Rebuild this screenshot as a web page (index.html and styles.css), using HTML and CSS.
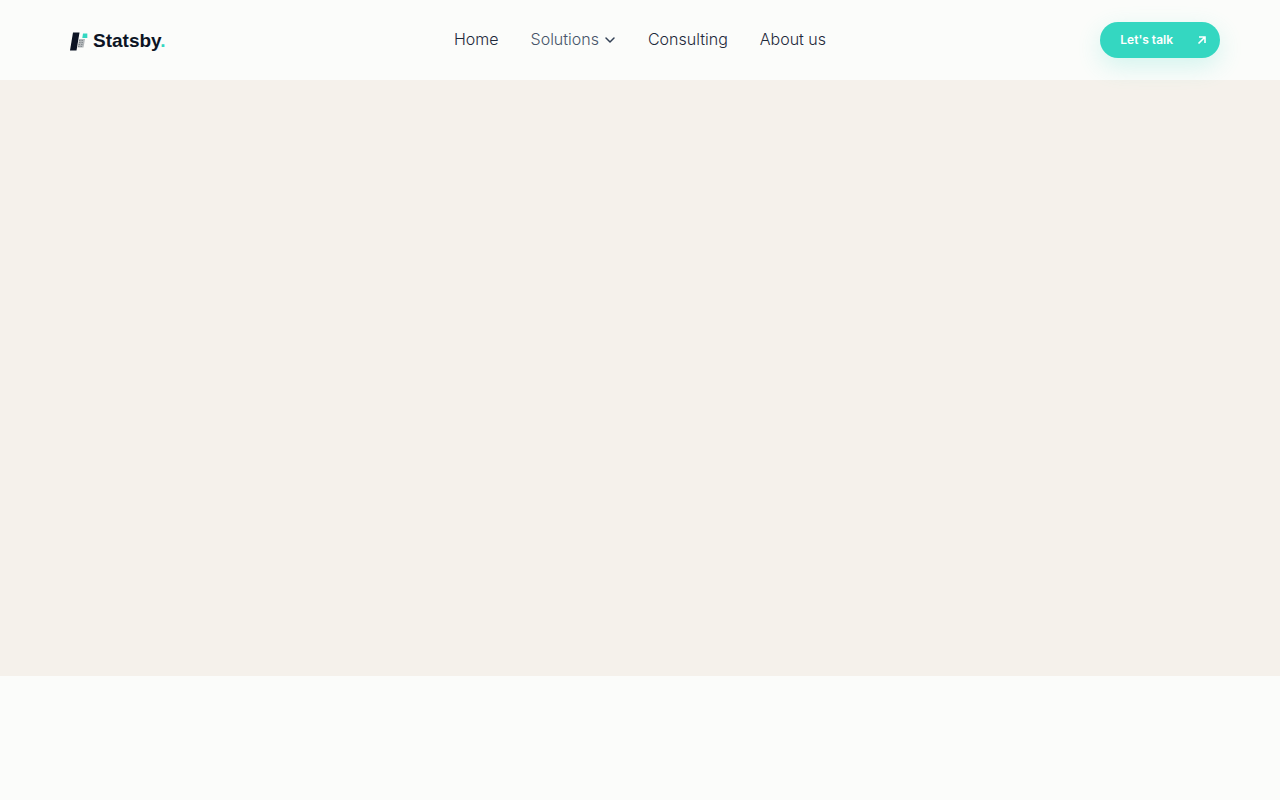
FILE: index.html
```html
<!DOCTYPE html>
<html lang="en">
<head>
<meta charset="utf-8">
<meta name="viewport" content="width=device-width, initial-scale=1">
<title>Statsby</title>
<link rel="stylesheet" href="styles.css">
</head>
<body>
<header class="header">
  <a class="brand" href="#">
    <svg class="brand-mark" viewBox="0 0 18 20" aria-hidden="true">
      <path d="M3 1.5h6.5L6.5 19.5H0z" fill="#0c1424"/>
      <path d="M9 8h6l-1.5 8.5H7.5z" fill="#b4b8ba"/>
      <path d="M9 9.5h5M9 11.5h5M8.500 13.500h5M8 15.500h5" stroke="#858c91" stroke-dasharray="1.500 1"/>
      <path d="M13 2.500h4.300v4.500h-5z" fill="#34d7c1"/>
    </svg>
    <span class="brand-name">Statsby<span class="brand-dot">.</span></span>
  </a>
  <nav class="nav" aria-label="Main">
    <a class="nav-link" href="#">Home</a>
    <button class="nav-link nav-toggle" type="button" aria-expanded="false">Solutions
      <svg class="chevron" viewBox="0 0 12 12" aria-hidden="true"><path d="M2 4l4 4 4-4" fill="none" stroke="currentColor" stroke-width="1.5" stroke-linecap="round" stroke-linejoin="round"/></svg>
    </button>
    <a class="nav-link" href="#">Consulting</a>
    <a class="nav-link" href="#">About us</a>
  </nav>
  <div class="actions">
    <a class="cta" href="#">Let's talk
      <svg class="arrow" viewBox="0 0 10 10" aria-hidden="true"><path d="M2 2h6v6M8 2L1.500 8.500" fill="none" stroke="currentColor" stroke-width="1.6"/></svg>
    </a>
  </div>
</header>
<main>
  <section class="hero"></section>
</main>
</body>
</html>
```
FILE: styles.css
```css
* {
  box-sizing: border-box;
}

body {
  margin: 0;
  min-height: 100vh;
  background: #fbfcfa;
  color: #1e293b;
  font-family: Inter, "Liberation Sans", sans-serif;
}

a {
  color: inherit;
  text-decoration: none;
}

.header {
  position: relative;
  z-index: 1;
  display: grid;
  grid-template-columns: 1fr auto 1fr;
  align-items: center;
  padding: 22px 60px;
  background: #fbfcfa;
}

.brand {
  display: flex;
  align-items: center;
  gap: 5px;
  padding: 2px 0 0 10px;
}

.brand-mark {
  width: 18px;
  height: 20px;
}

.brand-name {
  color: #0c1424;
  font-family: "Liberation Sans", Arial, sans-serif;
  font-size: 19px;
  font-weight: 700;
  line-height: 24px;
}

.brand-dot {
  color: #34d7c1;
}

.nav {
  display: flex;
  align-items: center;
  gap: 32px;
  padding-bottom: 2px;
}

.nav-link {
  font-size: 16px;
  font-weight: 300;
  line-height: 24px;
}

.nav-toggle {
  display: flex;
  align-items: center;
  gap: 5px;
  padding: 0;
  border: 0;
  background: none;
  color: #475569;
  font-family: inherit;
}

.chevron {
  width: 12px;
  height: 12px;
  margin-top: 2px;
  color: #334155;
}

.actions {
  display: flex;
  justify-content: flex-end;
}

.cta {
  display: flex;
  align-items: center;
  gap: 24px;
  padding: 8px 13px 8px 20px;
  border-radius: 18px;
  background: #34d7c1;
  box-shadow: 0 8px 24px rgba(52, 215, 193, 0.2);
  color: #fff;
  font-size: 12px;
  font-weight: 600;
  line-height: 20px;
}

.arrow {
  width: 10px;
  height: 10px;
}

.hero {
  height: 596px;
  background: #f5f1eb;
}
```
